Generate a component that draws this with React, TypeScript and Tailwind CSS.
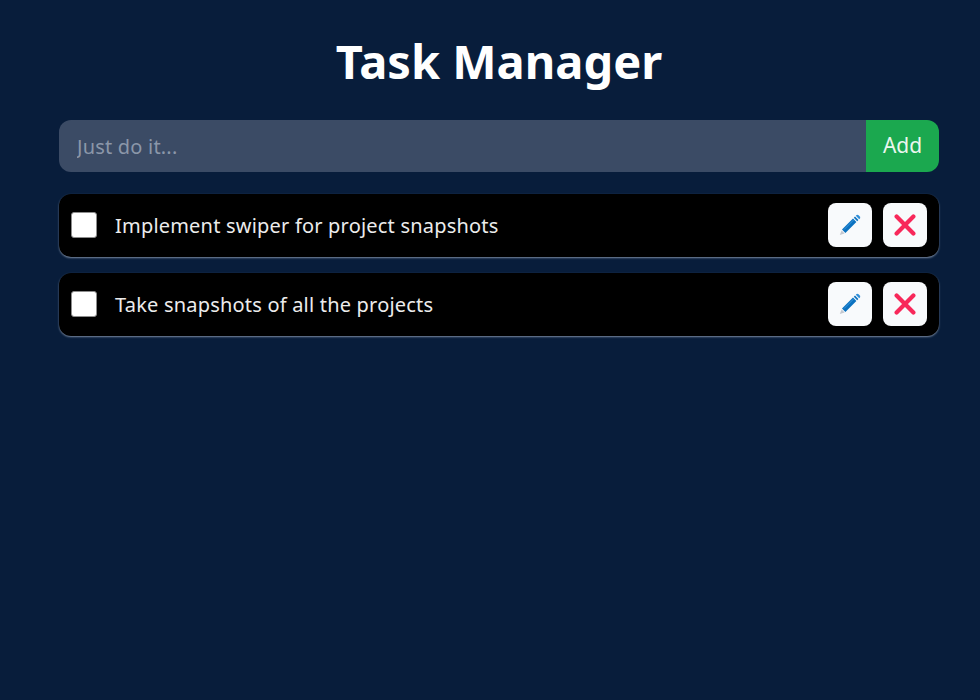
const tasks = [
  'Implement swiper for project snapshots',
  'Take snapshots of all the projects',
];

function PencilIcon() {
  return (
    <svg className="w-[22px] h-[22px]" viewBox="0 0 22 22">
      <path d="M0.8 21 L2.6 16.4 L5.6 19.4 Z" fill="#c3c8d0" />
      <path d="M3 15.6 L14 4.6 L17.4 8 L6.4 19 Z" fill="#0b72c0" />
      <path d="M14.8 3.8 L16 2.6 L19.4 6 L18.2 7.2 Z" fill="#0b72c0" />
      <path d="M16.8 1.8 L17.6 1 Q18.6 0.4 19.6 1.3 L20.8 2.5 Q21.6 3.4 21 4.4 L20.2 5.2 Z" fill="#2f8ed8" />
      <path d="M5 15.6 L14.6 6" stroke="#3f9ade" strokeWidth="0.9" fill="none" />
    </svg>
  );
}

function CrossIcon() {
  return (
    <svg className="w-[22px] h-[22px]" viewBox="0 0 22 22">
      <path d="M2.6 2.6 L19.4 19.4 M19.4 2.6 L2.6 19.4" stroke="#f8285a" strokeWidth="4.2" strokeLinecap="round" fill="none" />
    </svg>
  );
}

export default function App() {
  return (
    <div className="min-h-[700px] bg-[#081d3b] pl-[59px] pr-[41px] pt-[29px] font-['Noto_Sans','Open_Sans',sans-serif]">
      <h1 className="text-center text-[47px] leading-[65px] font-bold text-white">Task Manager</h1>

      <div className="flex mt-[26px] h-[52px]">
        <input
          placeholder="Just do it..."
          className="flex-1 h-full px-[18px] bg-[#3b4b65] rounded-l-[12px] text-[20px] tracking-[0.2px] text-white outline-none placeholder:text-[#8b97a9]"
        />
        <button className="w-[73px] h-full bg-[#1ba84f] rounded-r-[12px] text-[21px] text-[#eaf6ee]">Add</button>
      </div>

      <div className="flex flex-col gap-[16px] mt-[22px]">
        {tasks.map(task => (
          <div
            key={task}
            className="flex items-center h-[63px] px-[12px] pb-[2px] bg-black rounded-[12px] shadow-[0_1px_2px_rgba(148,163,184,0.8)]"
          >
            <div className="w-[26px] h-[26px] bg-white rounded-[3px] border border-[#8d8d8d]" />
            <span className="ml-[18px] pt-[2px] flex-1 text-[20px] tracking-[0.2px] text-[#ececec]">{task}</span>
            <button className="flex items-center justify-center w-[44px] h-[44px] bg-[#f8fafc] rounded-[8px]">
              <PencilIcon />
            </button>
            <button className="flex items-center justify-center w-[44px] h-[44px] ml-[11px] bg-[#f8fafc] rounded-[8px]">
              <CrossIcon />
            </button>
          </div>
        ))}
      </div>
    </div>
  );
}
